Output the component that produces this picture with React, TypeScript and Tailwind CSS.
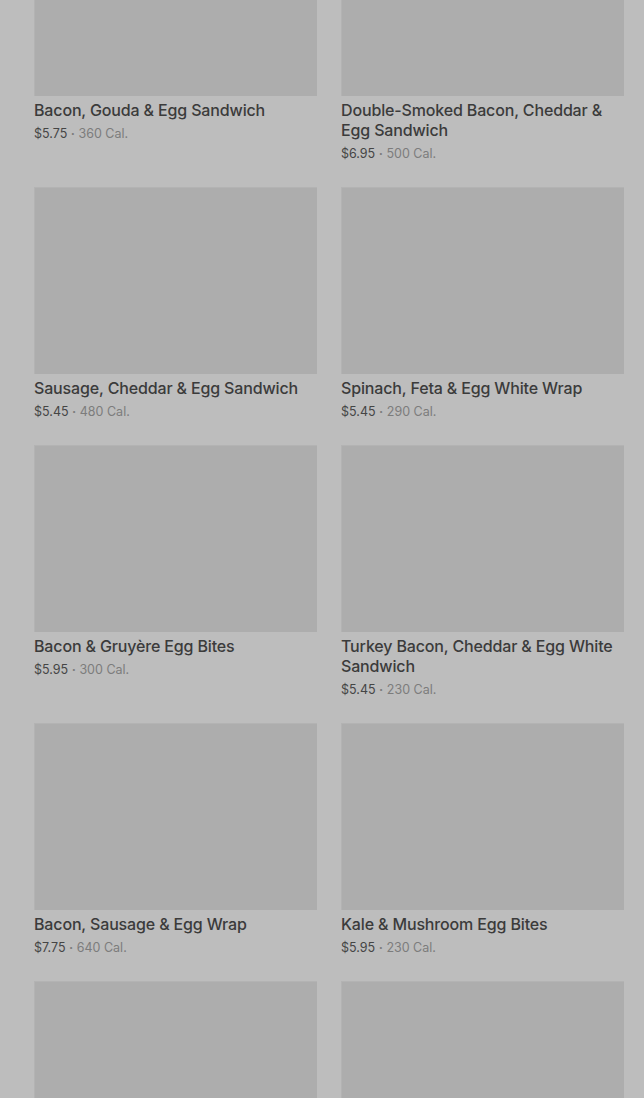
const items = [
  { name: "Bacon, Gouda & Egg Sandwich", price: "$5.75", cal: "360 Cal." },
  { name: "Double-Smoked Bacon, Cheddar & Egg Sandwich", price: "$6.95", cal: "500 Cal." },
  { name: "Sausage, Cheddar & Egg Sandwich", price: "$5.45", cal: "480 Cal." },
  { name: "Spinach, Feta & Egg White Wrap", price: "$5.45", cal: "290 Cal." },
  { name: "Bacon & Gruyère Egg Bites", price: "$5.95", cal: "300 Cal." },
  { name: "Turkey Bacon, Cheddar & Egg White Sandwich", price: "$5.45", cal: "230 Cal." },
  { name: "Bacon, Sausage & Egg Wrap", price: "$7.75", cal: "640 Cal." },
  { name: "Kale & Mushroom Egg Bites", price: "$5.95", cal: "230 Cal." },
];

function ProductImage() {
  return <div className="h-[187px] w-full bg-[#adadad] border-l border-t border-[#b3b3b3]" />;
}

function ProductCard({ name, price, cal }: { name: string; price: string; cal: string }) {
  return (
    <div className="flex flex-col">
      <ProductImage />
      <span className="mt-1 text-base leading-5 font-medium text-[#3b3b3b] tracking-[-0.15px]">{name}</span>
      <span className="mt-1 text-[12.5px] leading-5 text-[#454545]">
        {price} <span className="font-bold text-[#7c7c7c]">·</span>{" "}
        <span className="text-[#7c7c7c]">{cal}</span>
      </span>
    </div>
  );
}

export default function App() {
  return (
    <div
      className="h-[1098px] w-full overflow-hidden bg-[#bdbdbd]"
      style={{ fontFamily: "Inter, 'Liberation Sans', sans-serif" }}
    >
      <div className="-mt-[91px] grid grid-cols-2 gap-x-6 gap-y-[23px] pl-[34px] pr-5">
        {items.map((item) => (
          <ProductCard key={item.name} {...item} />
        ))}
        <ProductImage />
        <ProductImage />
      </div>
    </div>
  );
}
